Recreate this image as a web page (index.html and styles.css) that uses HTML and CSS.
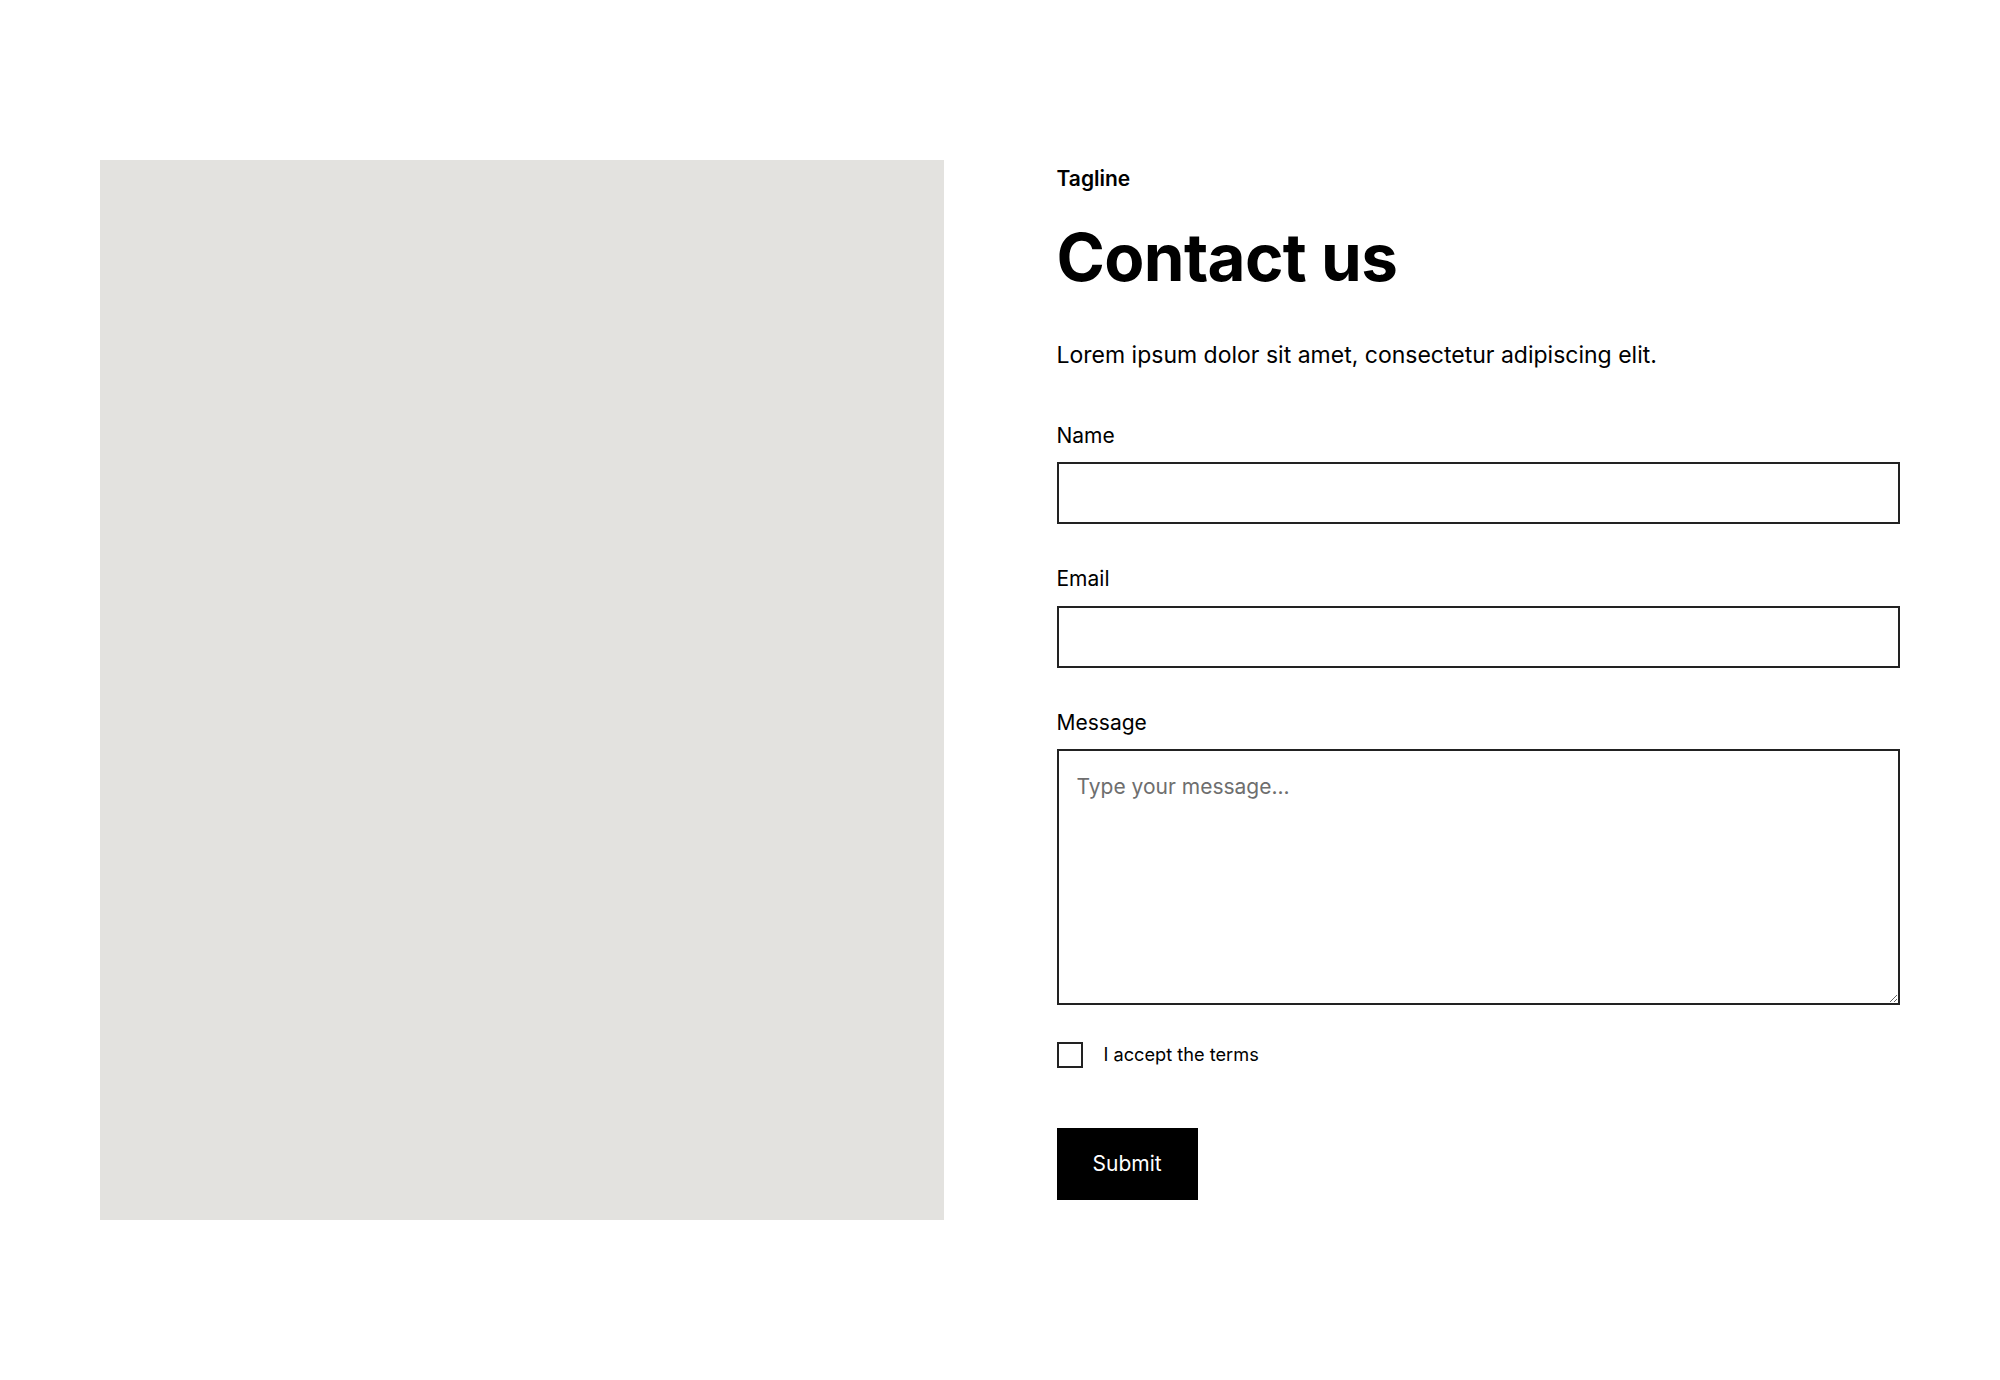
FILE: index.html
```html
<!DOCTYPE html>
<html lang="en">
<head>
<meta charset="utf-8">
<title>Contact us</title>
<link rel="stylesheet" href="styles.css">
</head>
<body>
<section class="contact">
  <div class="placeholder-image"></div>
  <div class="contact-content">
    <p class="tagline">Tagline</p>
    <h1 class="title">Contact us</h1>
    <p class="lead">Lorem ipsum dolor sit amet, consectetur adipiscing elit.</p>
    <form class="form">
      <div class="field">
        <label class="label" for="name">Name</label>
        <input class="input" type="text" id="name">
      </div>
      <div class="field">
        <label class="label" for="email">Email</label>
        <input class="input" type="email" id="email">
      </div>
      <div class="field">
        <label class="label" for="message">Message</label>
        <textarea class="textarea" id="message" placeholder="Type your message..."></textarea>
      </div>
      <label class="terms">
        <input class="checkbox" type="checkbox">
        <span class="terms-text">I accept the terms</span>
      </label>
      <button class="submit" type="button">Submit</button>
    </form>
  </div>
</section>
</body>
</html>
```

FILE: styles.css
```css
* {
  box-sizing: border-box;
}

html, body {
  margin: 0;
  padding: 0;
  background: #ffffff;
}

body {
  font-family: Inter, "Noto Sans", "Liberation Sans", sans-serif;
  color: #000000;
}

.contact {
  display: grid;
  grid-template-columns: 1fr 1fr;
  column-gap: 113px;
  align-items: start;
  padding: 160px 100px;
}

.placeholder-image {
  height: 1060px;
  background: #e3e2df;
}

.contact-content {
  padding-top: 3px;
}

.tagline {
  margin: 0;
  font-size: 21px;
  font-weight: 600;
  line-height: 1.5;
}

.title {
  margin: 24px 0 0;
  font-size: 65.5px;
  font-weight: 700;
  line-height: 1.2;
  letter-spacing: -0.01em;
}

.lead {
  margin: 40.5px 0 0;
  font-size: 23px;
  line-height: 1.5;
}

.form {
  margin-top: 47.5px;
  display: flex;
  flex-direction: column;
  align-items: flex-start;
}

.field {
  width: 100%;
  display: flex;
  flex-direction: column;
  margin-bottom: 39px;
}

.field:nth-child(3) {
  margin-bottom: 37px;
}

.label {
  font-size: 21px;
  line-height: 1.5;
  margin-bottom: 11px;
}

.input,
.textarea {
  width: 100%;
  border: 2px solid #222222;
  border-radius: 0;
  background: #ffffff;
  font-family: inherit;
  font-size: 21px;
  line-height: 1.5;
  color: #000000;
  outline: none;
}

.input {
  height: 62px;
  padding: 0 18px;
}

.textarea {
  height: 256px;
  padding: 20px 18px;
  display: block;
}

.textarea::placeholder {
  color: #6e6e6e;
}

.terms {
  display: flex;
  align-items: center;
  gap: 21px;
  height: 26px;
  cursor: pointer;
}

.checkbox {
  appearance: none;
  -webkit-appearance: none;
  margin: 0;
  width: 26px;
  height: 26px;
  border: 2px solid #222222;
  background: #ffffff;
  flex: none;
}

.terms-text {
  font-size: 18.2px;
  line-height: 1.5;
}

.submit {
  margin-top: 60px;
  height: 72px;
  padding: 0 36px;
  border: 0;
  border-radius: 0;
  background: #000000;
  color: #ffffff;
  font-family: inherit;
  font-size: 21px;
  line-height: 1.5;
  cursor: pointer;
}
```
